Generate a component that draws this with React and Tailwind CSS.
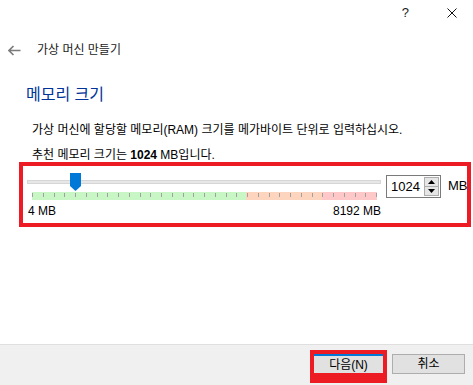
import React from 'react';

const FONT = { fontFamily: '"Liberation Sans", "Noto Sans CJK KR", sans-serif' };

function Thumb() {
  return (
    <svg width="11" height="18" viewBox="0 0 11 18" className="absolute left-[43px] top-[7px]">
      <polygon points="0,0 11,0 11,13 5.5,18 0,13" fill="#0078d7" />
    </svg>
  );
}

function TickBand() {
  const ticks = Array.from({ length: 33 });
  return (
    <div className="relative ml-[5px] mr-[4px] mt-[8px] h-[8px] flex">
      <div className="w-[214px] bg-[#c8f7c5]" />
      <div className="w-[76px] bg-[#fdd5be]" />
      <div className="flex-1 bg-[#fec8c8]" />
      <div className="absolute inset-0 flex justify-between pt-[1px]">
        {ticks.map((_, i) => (
          <div key={i} className="w-px h-[4px] bg-[#a0a0a0]" />
        ))}
      </div>
    </div>
  );
}

function SpinBox() {
  return (
    <div className="shrink-0 ml-[5px] mt-[9px] w-[55px] h-[23px] border border-[#7a7a7a] bg-white flex items-center">
      <span className="pl-[4px] text-[13px] text-black flex-1 leading-none">1024</span>
      <div className="mr-[1px] w-[15px] h-[19px] flex flex-col border border-[#adadad] bg-[#e6e6e6]">
        <div className="flex-1 flex items-center justify-center border-b border-[#adadad]">
          <svg width="7" height="4" viewBox="0 0 7 4"><polygon points="0,4 7,4 3.5,0" fill="#000" /></svg>
        </div>
        <div className="flex-1 flex items-center justify-center">
          <svg width="7" height="4" viewBox="0 0 7 4"><polygon points="0,0 7,0 3.5,4" fill="#000" /></svg>
        </div>
      </div>
    </div>
  );
}

export default function App() {
  return (
    <div className="w-[473px] h-[385px] bg-white flex flex-col overflow-hidden text-[#1a1a1a]" style={FONT}>
      <div className="h-[25px] flex items-center justify-end pr-[16px]">
        <span className="text-[13px] leading-none mr-[38px]">?</span>
        <svg width="10" height="10" viewBox="0 0 10 10">
          <path d="M0.5 0.5 L9.5 9.5 M9.5 0.5 L0.5 9.5" stroke="#111" strokeWidth="1" />
        </svg>
      </div>

      <div className="mt-[15px] h-[20px] flex items-center pl-[8px]">
        <svg width="13" height="11" viewBox="0 0 13 11">
          <path d="M1 5.5 H12.5 M5.5 1 L1 5.5 L5.5 10" stroke="#7a7a7a" strokeWidth="1.6" fill="none" />
        </svg>
        <span className="ml-[16px] text-[12px] leading-none">가상 머신 만들기</span>
      </div>

      <div className="mt-[24px] ml-[26px] h-[22px] flex items-center text-[16px] text-[#003399] leading-none">
        메모리 크기
      </div>

      <div className="mt-[16px] ml-[32px] h-[16px] flex items-center text-[12px] text-black leading-none">
        가상 머신에 할당할 메모리(RAM) 크기를 메가바이트 단위로 입력하십시오.
      </div>
      <div className="mt-[10px] ml-[32px] h-[14px] flex items-center text-[12px] text-black leading-none">
        추천 메모리 크기는&nbsp;<b className="font-bold">1024</b>&nbsp;MB입니다.
      </div>

      <div className="ml-[19px] w-[452px] h-[65px] border-4 border-[#ed1c24] flex items-start pl-[4px]">
        <div className="relative w-[354px] shrink-0">
          <div className="mt-[14px] h-[4px] bg-[#e7e7e7] border border-[#d6d6d6]" />
          <Thumb />
          <TickBand />
          <div className="mt-[4px] h-[14px] flex items-center justify-between pl-[1px] text-[12px] text-black leading-none">
            <span>4 MB</span>
            <span>8192 MB</span>
          </div>
        </div>
        <SpinBox />
        <span className="shrink-0 whitespace-nowrap ml-[7px] mt-[13px] text-[13px] text-black leading-none">MB</span>
      </div>

      <div className="flex-1" />

      <div className="h-[41px] bg-[#f0f0f0] border-t border-[#dfdfdf] flex items-start justify-end pr-[8px] pt-[5px]">
        <div className="border-[#ed1c24] border-t-4 border-l-4 border-r-4 border-b-[10px]">
          <div className="w-[69px] h-[19px] bg-[#e1e1e1] border-t-2 border-[#0078d7] flex items-center justify-center text-[12px] text-black leading-none">
            다음(N)
          </div>
        </div>
        <div className="ml-[5px] mt-[4px] w-[73px] h-[20px] bg-[#e1e1e1] border border-[#adadad] flex items-center justify-center text-[12px] text-black leading-none">
          취소
        </div>
      </div>
    </div>
  );
}
